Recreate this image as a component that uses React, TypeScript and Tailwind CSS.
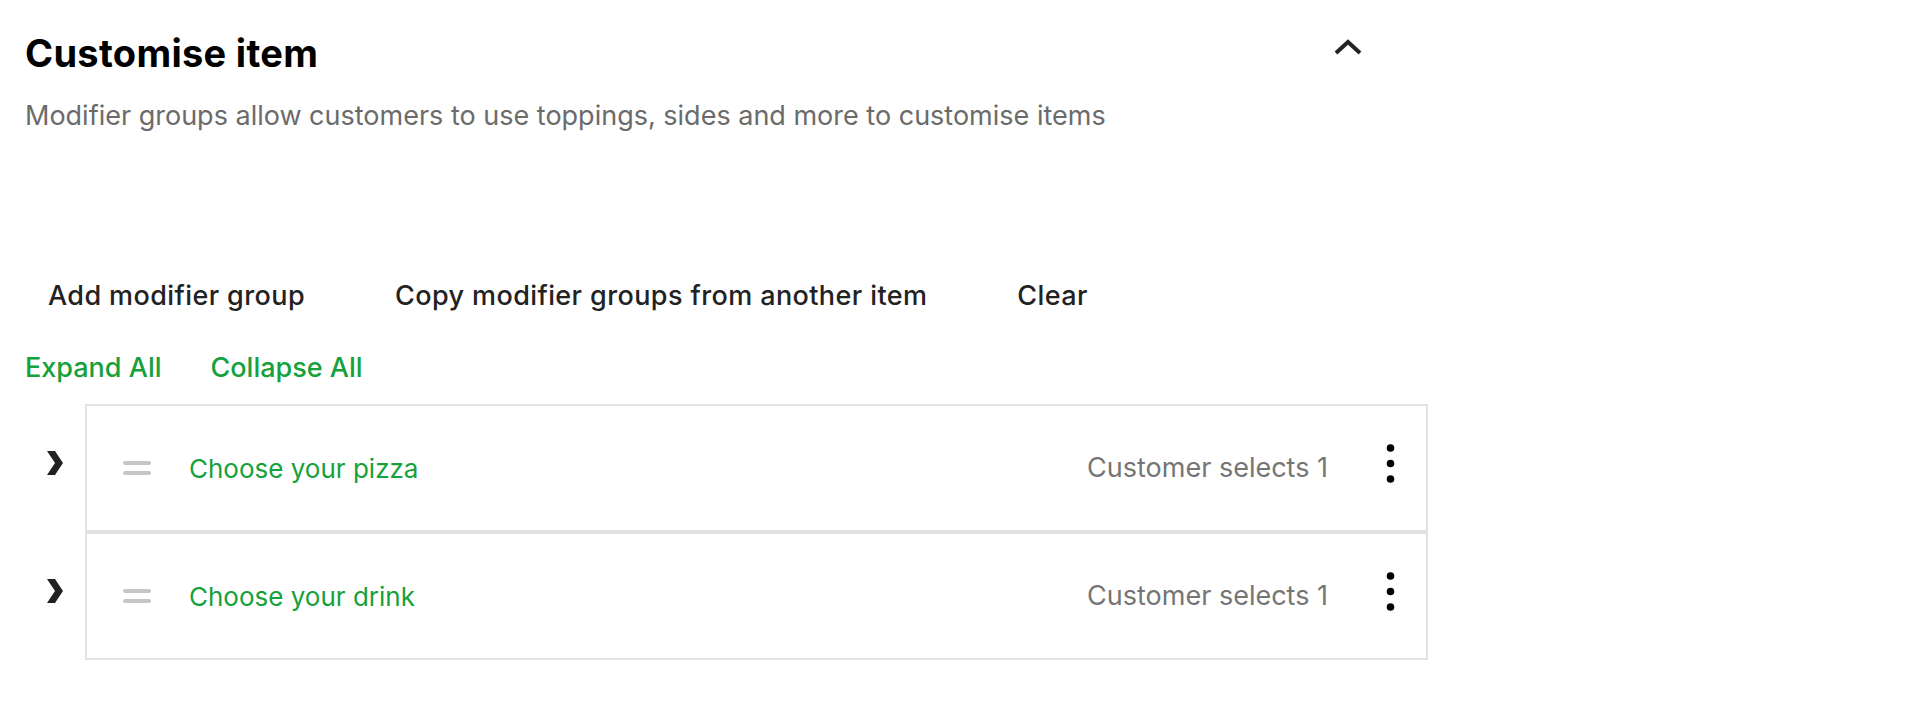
import { useState } from 'react';

const groups = [
  { id: 1, name: 'Choose your pizza', rule: 'Customer selects 1' },
  { id: 2, name: 'Choose your drink', rule: 'Customer selects 1' },
];

function ChevronUp() {
  return (
    <svg width="28" height="16" viewBox="0 0 28 16" fill="none">
      <polyline points="2,14 14,3 26,14" stroke="#222222" strokeWidth="4" />
    </svg>
  );
}

function ChevronRight() {
  return (
    <svg width="16" height="24" viewBox="0 0 16 24">
      <polygon points="0,0 8,0 16,12 8,24 0,24 8,12" fill="#222222" />
    </svg>
  );
}

function DragHandle() {
  return (
    <svg width="28" height="14" viewBox="0 0 28 14">
      <rect x="0" y="0" width="28" height="4" rx="2" fill="#c6c6c6" />
      <rect x="0" y="10" width="28" height="4" rx="2" fill="#c6c6c6" />
    </svg>
  );
}

function MoreVertical() {
  return (
    <svg width="9" height="40" viewBox="0 0 9 40">
      <circle cx="4.5" cy="4" r="3.8" fill="#000000" />
      <circle cx="4.5" cy="19.5" r="3.8" fill="#000000" />
      <circle cx="4.5" cy="35" r="3.8" fill="#000000" />
    </svg>
  );
}

export default function App() {
  const [open] = useState(true);

  return (
    <div className="min-h-screen bg-white pl-[25px] pt-[31px] font-['Inter','Liberation_Sans',sans-serif]">
      {/* Header */}
      <div className="flex w-[1337px] items-start justify-between">
        <h1 className="text-[38px] leading-[44px] font-bold tracking-[0.3px] text-black">Customise item</h1>
        <button className="mt-[8px]">
          <ChevronUp />
        </button>
      </div>
      <p className="mt-[25px] text-[27px] leading-[32px] text-[#6b6b6b]">
        Modifier groups allow customers to use toppings, sides and more to customise items
      </p>

      {open && (
        <>
          {/* Actions */}
          <div className="mt-[148px] flex gap-[44px] text-[27px] leading-[32px] font-medium tracking-[0.4px] text-[#222222]">
            <button className="px-[23px]">Add modifier group</button>
            <button className="px-[23px]">Copy modifier groups from another item</button>
            <button className="px-[23px]">Clear</button>
          </div>

          <div className="mt-[40px] flex gap-[49px] text-[27px] leading-[32px] font-medium text-[#15a13c]">
            <button>Expand All</button>
            <button>Collapse All</button>
          </div>

          {/* Modifier groups */}
          <div className="mt-[20px] flex flex-col">
            {groups.map((g) => (
              <div key={g.id} className="flex items-center">
                <div className="ml-[22px] mr-[22px] mb-[10px]">
                  <ChevronRight />
                </div>
                <div className="flex h-[128px] w-[1343px] items-center border-2 border-[#e2e2e2] pl-[36px] pr-[31px]">
                  <DragHandle />
                  <span className="ml-[38px] flex-1 text-[26px] text-[#15a13c]">{g.name}</span>
                  <span className="text-[27px] text-[#757575]">{g.rule}</span>
                  <div className="ml-[58px] mb-[8px]">
                    <MoreVertical />
                  </div>
                </div>
              </div>
            ))}
          </div>
        </>
      )}
    </div>
  );
}
